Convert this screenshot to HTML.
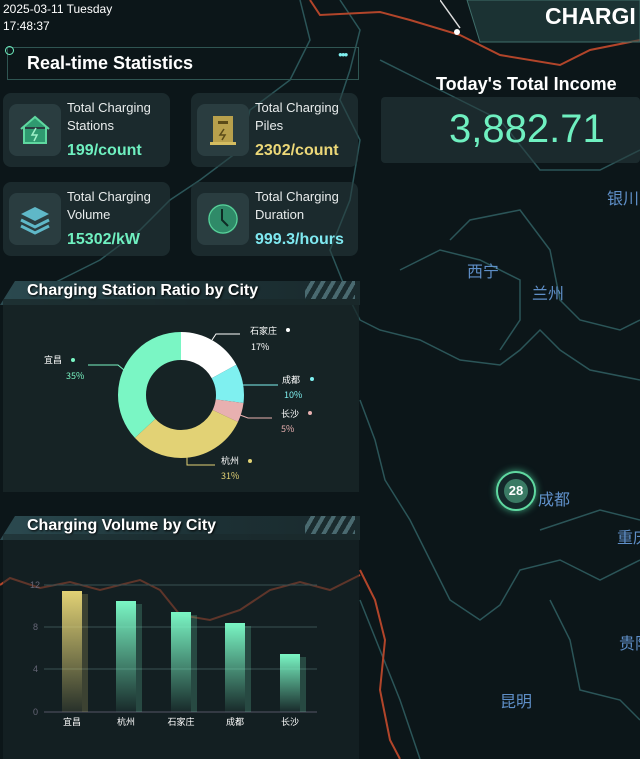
<!DOCTYPE html>
<html><head><meta charset="utf-8">
<style>
*{margin:0;padding:0;box-sizing:border-box}
body{width:640px;height:759px;overflow:hidden;background:#0c1619;font-family:"Liberation Sans","Noto Sans CJK SC",sans-serif;color:#fff;position:relative}
.abs{position:absolute}
.card{position:absolute;width:167px;height:74px;border-radius:8px;background:rgba(40,60,62,.55)}
.ic{position:absolute;left:6px;top:11px;width:52px;height:52px;border-radius:8px;background:#2a3d40}
.lbl{position:absolute;left:64px;top:6px;font-size:13px;line-height:18px;color:#e8ecec}
.val{position:absolute;left:64px;top:49px;font-size:16px;font-weight:bold}
.ph{position:absolute;left:0;width:360px;height:24px;background:linear-gradient(90deg,#2b4a50,#1c3034 60%,#1a2a2d)}
.ph span{position:absolute;left:27px;top:1px;font-size:16px;font-weight:bold;text-shadow:1px 1px 2px #000}
.pb{position:absolute;left:3px;width:356px;background:rgba(25,40,42,.75)}
.map{font-family:"Noto Sans CJK SC",sans-serif;color:#5f8fc8;font-size:16px;position:absolute}
</style></head><body>
<svg class="abs" style="left:0;top:0" width="640" height="759">
<g fill="none" stroke="#2b5558" stroke-width="1.5">
<path d="M300 0 L310 40 290 80 250 110 240 150 200 180 170 200 140 230 100 260 60 280 20 300"/>
<path d="M340 0 L360 30 350 70 340 100 360 140 350 200 330 250 350 300 360 320 380 330 420 340 460 360 500 365 520 350 540 330 560 350 590 370 640 380"/>
<path d="M400 270 L440 250 480 260 520 280 520 320 500 350"/>
<path d="M450 240 L470 220 520 210 550 250 560 300 580 320 620 330 640 320"/>
<path d="M360 400 L375 440 385 480 410 520 430 560 450 600 480 620 500 605 520 570 560 560 600 580 640 560"/>
<path d="M540 530 L600 510 640 520"/>
<path d="M550 600 L570 640 580 690 620 700 640 720"/>
<path d="M360 600 L380 650 400 700 420 759"/>
<path d="M380 60 L420 80 460 100 500 120 540 170 600 170 640 150"/>
</g>
<g fill="none" stroke="#b2452a" stroke-width="2">
<path d="M310 0 L320 15 380 12 410 20 460 35 500 55 560 65 590 50 640 40"/>
<path d="M0 585 L10 578 40 588 70 582 100 590 140 580 160 590 180 615 210 620 240 610 270 590 300 582 330 590 350 580 360 575"/>
<path d="M360 570 L375 600 385 640 380 690 390 740 400 759"/>
</g>
</svg>

<div class="abs" style="left:3px;top:1px;font-size:12px;line-height:17px">2025-03-11 Tuesday<br>17:48:37</div>

<svg class="abs" style="left:440px;top:0" width="200" height="46"><path d="M0 0 L20 28" stroke="#ddd" stroke-width="1.5"/><circle cx="17" cy="32" r="3" fill="#fff"/><path d="M27 0 L200 0 200 42 40 42 Z" fill="rgba(40,75,72,.55)" stroke="#3f6e6a"/></svg>
<div class="abs" style="left:545px;top:3px;font-size:23px;font-weight:bold">CHARGI</div>

<div class="abs" style="left:7px;top:47px;width:352px;height:33px;border:1px solid #2f5552"></div>
<div class="abs" style="left:5px;top:46px;width:9px;height:9px;border:1.5px solid #6ff0c0;border-radius:50%"></div>
<div class="abs" style="left:338px;top:50px;font-size:8px;color:#7ff0f0;letter-spacing:-2px">●●●</div>
<div class="abs" style="left:27px;top:53px;font-size:18px;font-weight:bold">Real-time Statistics</div>

<div class="card" style="left:3px;top:93px"><div class="ic"><svg width="52" height="52"><path d="M12 25 L26 13 40 25 M15 23 V39 H37 V23" fill="#2f9a70" stroke="#5fd8a0" stroke-width="2"/><path d="M27 24 L23 31 H28 L25 37" stroke="#9ff0c8" stroke-width="1.5" fill="none"/></svg></div><div class="lbl">Total Charging<br>Stations</div><div class="val" style="color:#6ff0c0">199/count</div></div>
<div class="card" style="left:191px;top:93px"><div class="ic"><svg width="52" height="52"><rect x="16" y="12" width="20" height="27" fill="#b8a04c"/><rect x="13" y="38" width="26" height="3" fill="#d4bc60"/><rect x="21" y="17" width="10" height="3" fill="#5a4a18"/><path d="M27 25 L23 31 H28 L25 36" stroke="#5a4a18" stroke-width="1.5" fill="none"/></svg></div><div class="lbl">Total Charging<br>Piles</div><div class="val" style="color:#ecd878">2302/count</div></div>
<div class="card" style="left:3px;top:182px"><div class="ic"><svg width="52" height="52"><path d="M26 14 L40 21 26 28 12 21Z" fill="#5fb8c8"/><path d="M12 27 L26 34 40 27 M12 33 L26 40 40 33" stroke="#5fb8c8" stroke-width="3" fill="none"/></svg></div><div class="lbl">Total Charging<br>Volume</div><div class="val" style="color:#6ff0c0">15302/kW</div></div>
<div class="card" style="left:191px;top:182px"><div class="ic"><svg width="52" height="52"><circle cx="26" cy="26" r="15" fill="#2f8a68"/><circle cx="26" cy="26" r="14" fill="none" stroke="#5fd8a0" stroke-width="1"/><path d="M25 16 V27 L31 33" stroke="#0e2a24" stroke-width="2" fill="none"/></svg></div><div class="lbl">Total Charging<br>Duration</div><div class="val" style="color:#7fe8f0">999.3/hours</div></div>

<div class="abs" style="left:436px;top:74px;font-size:18px;font-weight:bold">Today's Total Income</div>
<div class="abs" style="left:381px;top:97px;width:259px;height:66px;background:rgba(40,60,62,.55);border-radius:4px"></div>
<div class="abs" style="left:449px;top:107px;font-size:40px;color:#6ff0c0">3,882.71</div>

<div class="ph" style="top:281px;clip-path:polygon(15px 0,100% 0,100% 100%,0 100%)"><span>Charging Station Ratio by City</span></div>
<div class="abs" style="left:305px;top:281px;width:50px;height:18px;background:repeating-linear-gradient(120deg,transparent 0 5px,#4a6a70 5px 9px)"></div>
<div class="pb" style="top:299px;height:193px"></div>
<svg class="abs" style="left:0;top:299px" width="360" height="193">
<g transform="translate(181,96) rotate(-90)" fill="none" stroke-width="28">
<circle r="49" stroke="#fff" stroke-dasharray="52.3 400"/>
<circle r="49" stroke="#7ff0f0" stroke-dasharray="0 52.3 30.8 400"/>
<circle r="49" stroke="#e8b0b0" stroke-dasharray="0 83.1 15.4 400"/>
<circle r="49" stroke="#e2d275" stroke-dasharray="0 98.5 95.4 400"/>
<circle r="49" stroke="#7af6c4" stroke-dasharray="0 193.9 114 400"/>
</g>
<path d="M88 66 L118 66 124 71" stroke="#7af6c4" fill="none"/>
<path d="M212 41 L216 35 240 35" stroke="#fff" fill="none"/>
<path d="M243 86 L278 86" stroke="#7ff0f0" fill="none"/>
<path d="M240 116 L248 119 272 119" stroke="#e8b0b0" fill="none"/>
<path d="M187 156 L187 166 215 166" stroke="#e2d275" fill="none"/>
<g font-size="9" font-family="Noto Sans CJK SC,sans-serif">
<text x="44" y="64" fill="#fff">宜昌</text><circle cx="73" cy="61" r="2" fill="#7af6c4"/><text x="66" y="80" fill="#7af6c4">35%</text>
<text x="250" y="35" fill="#fff">石家庄</text><circle cx="288" cy="31" r="2" fill="#fff"/><text x="251" y="51" fill="#fff">17%</text>
<text x="282" y="84" fill="#fff">成都</text><circle cx="312" cy="80" r="2" fill="#7ff0f0"/><text x="284" y="99" fill="#7ff0f0">10%</text>
<text x="281" y="118" fill="#fff">长沙</text><circle cx="310" cy="114" r="2" fill="#e8b0b0"/><text x="281" y="133" fill="#e8b0b0">5%</text>
<text x="221" y="165" fill="#fff">杭州</text><circle cx="250" cy="162" r="2" fill="#e2d275"/><text x="221" y="180" fill="#e2d275">31%</text>
</g></svg>

<div class="ph" style="top:516px;clip-path:polygon(15px 0,100% 0,100% 100%,0 100%)"><span>Charging Volume by City</span></div>
<div class="abs" style="left:305px;top:516px;width:50px;height:18px;background:repeating-linear-gradient(120deg,transparent 0 5px,#4a6a70 5px 9px)"></div>
<div class="pb" style="top:534px;height:225px;background:rgba(25,40,42,.55)"></div>
<svg class="abs" style="left:0;top:534px" width="360" height="225">
<defs><linearGradient id="g" x1="0" y1="0" x2="0" y2="1"><stop offset="0" stop-color="#7af6c4"/><stop offset="1" stop-color="#7af6c4" stop-opacity=".05"/></linearGradient>
<linearGradient id="y" x1="0" y1="0" x2="0" y2="1"><stop offset="0" stop-color="#e2d275"/><stop offset="1" stop-color="#e2d275" stop-opacity=".1"/></linearGradient></defs>
<g stroke="#3a5052" stroke-width="1"><line x1="44" y1="51" x2="317" y2="51"/><line x1="44" y1="93" x2="317" y2="93"/><line x1="44" y1="135" x2="317" y2="135"/><line x1="44" y1="178" x2="317" y2="178" stroke="#556"/></g>
<g font-size="9" fill="#667" ><text x="30" y="54">12</text><text x="33" y="96">8</text><text x="33" y="138">4</text><text x="33" y="181">0</text></g>
<rect x="62" y="57" width="20" height="121" fill="url(#y)"/><rect x="82" y="60" width="6" height="118" fill="#e2d275" opacity=".2"/>
<rect x="116" y="67" width="20" height="111" fill="url(#g)"/><rect x="136" y="70" width="6" height="108" fill="#7af6c4" opacity=".2"/>
<rect x="171" y="78" width="20" height="100" fill="url(#g)"/><rect x="191" y="81" width="6" height="97" fill="#7af6c4" opacity=".2"/>
<rect x="225" y="89" width="20" height="89" fill="url(#g)"/><rect x="245" y="92" width="6" height="86" fill="#7af6c4" opacity=".2"/>
<rect x="280" y="120" width="20" height="58" fill="url(#g)"/><rect x="300" y="123" width="6" height="55" fill="#7af6c4" opacity=".2"/>
<g font-size="9" fill="#fff" font-family="Noto Sans CJK SC,sans-serif" text-anchor="middle"><text x="72" y="191">宜昌</text><text x="126" y="191">杭州</text><text x="181" y="191">石家庄</text><text x="235" y="191">成都</text><text x="290" y="191">长沙</text></g>
</svg>

<div class="map" style="left:467px;top:258px">西宁</div>
<div class="map" style="left:532px;top:280px">兰州</div>
<div class="map" style="left:538px;top:486px">成都</div>
<div class="map" style="left:500px;top:688px">昆明</div>
<div class="map" style="left:607px;top:185px;white-space:nowrap">银川</div>
<div class="map" style="left:617px;top:524px;white-space:nowrap">重庆</div>
<div class="map" style="left:619px;top:630px;white-space:nowrap">贵阳</div>
<div class="abs" style="left:496px;top:471px;width:40px;height:40px;border-radius:50%;border:2px solid #5fd8a0;box-shadow:0 0 8px #3fa880;background:#14282a"></div>
<div class="abs" style="left:504px;top:479px;width:24px;height:24px;border-radius:50%;background:#3a7a64;font-size:13px;font-weight:bold;text-align:center;line-height:24px">28</div>
</body></html>
